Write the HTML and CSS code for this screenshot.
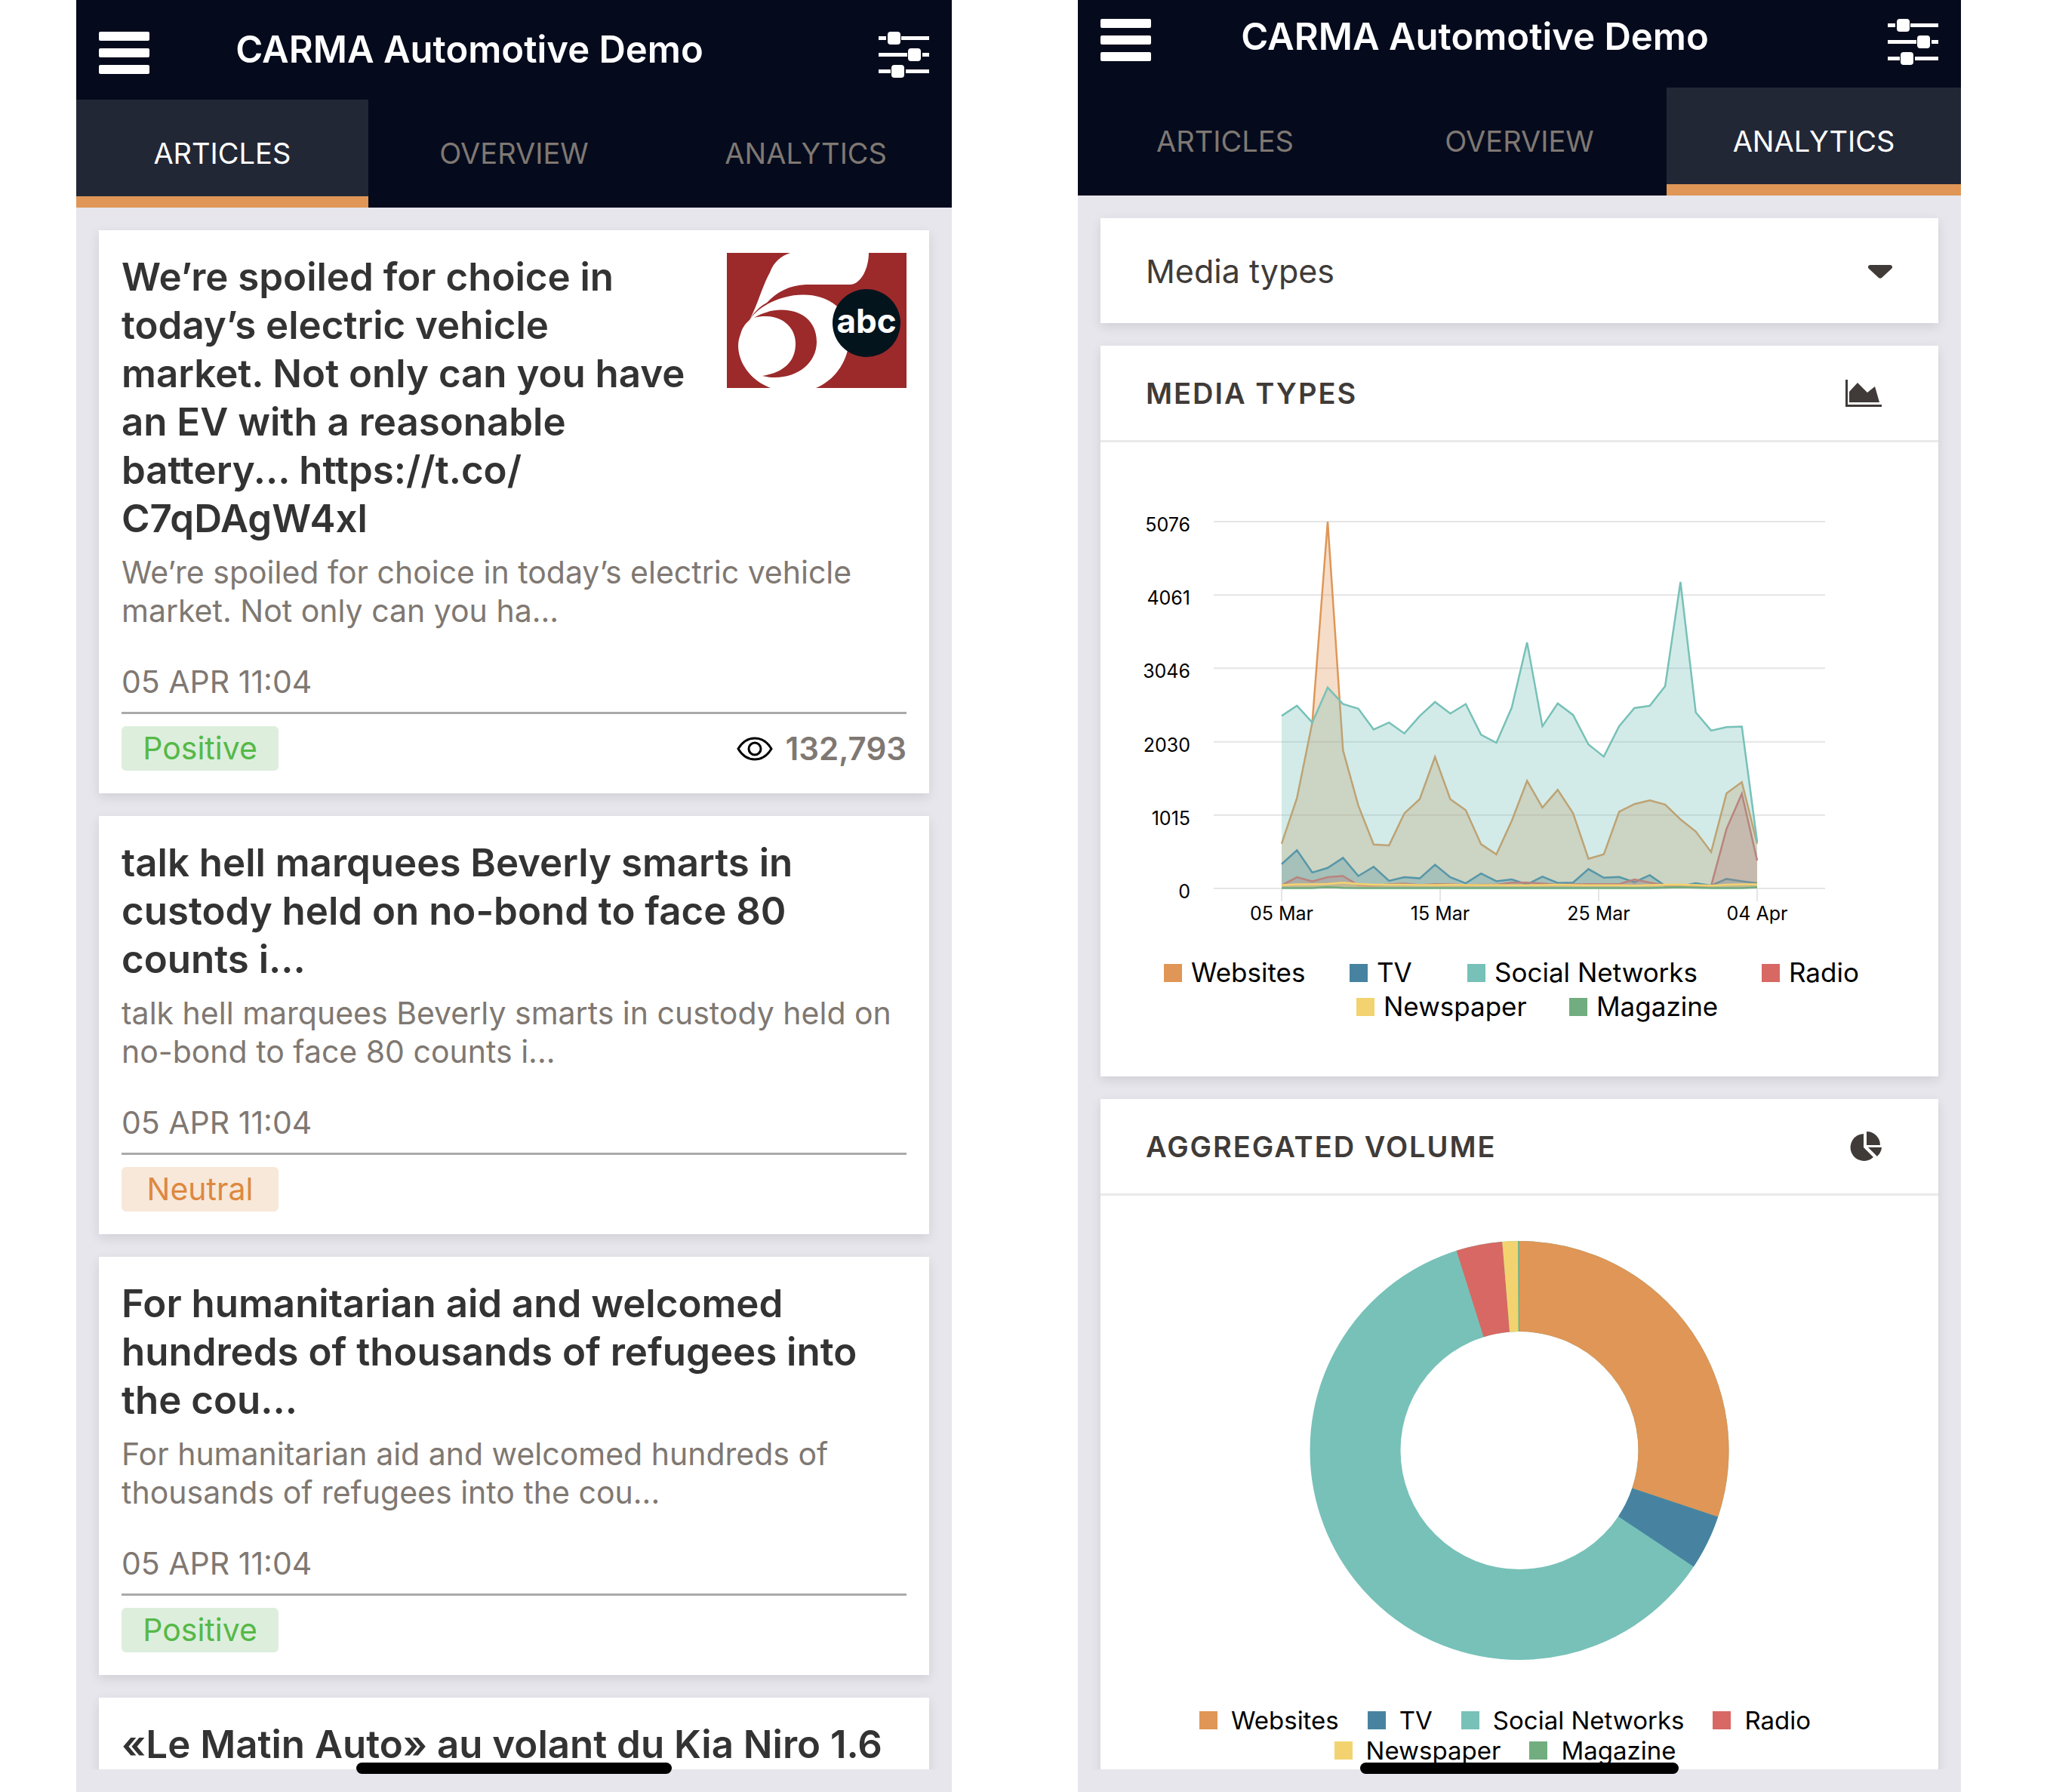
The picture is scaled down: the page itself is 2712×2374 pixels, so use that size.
FILE: index.html
```
<!DOCTYPE html>
<html lang="en">
<head>
    <meta charset="UTF-8">
    <meta name="viewport" content="width=device-width, initial-scale=1.0">
    <title>CARMA Automotive Demo</title>
    <link rel="stylesheet" href="styles.css">
</head>
<body>
    <div class="screens">

        <!-- Articles screen -->
        <section class="phone">
            <header class="header">
                <div class="topbar">
                    <button type="button" class="icon-btn" aria-label="Menu">
                        <svg class="icon-menu" viewBox="0 0 67 57"><rect width="67" height="12" rx="2"/><rect y="22" width="67" height="12" rx="2"/><rect y="44" width="67" height="12" rx="2"/></svg>
                    </button>
                    <h1>CARMA Automotive Demo</h1>
                    <button type="button" class="icon-btn" aria-label="Filters">
                        <svg class="icon-filter" viewBox="0 0 67 62">
                            <path d="M0 6h10v5H0zM30 6h37v5H30zM0 28h38v5H0zM58 28h9v5h-9zM0 50h16v5H0zM36 50h31v5H36z"/>
                            <rect x="12" width="17" height="17" rx="4"/><rect x="39" y="22" width="17" height="17" rx="4"/><rect x="17" y="44" width="17" height="17" rx="4"/>
                        </svg>
                    </button>
                </div>
                <nav class="tabs">
                    <a href="#" class="active">ARTICLES</a>
                    <a href="#">OVERVIEW</a>
                    <a href="#">ANALYTICS</a>
                </nav>
            </header>
            <main class="content">
                <article class="card article">
                    <div class="article-top">
                        <h2>We’re spoiled for choice in<br>today’s electric vehicle<br>market. Not only can you have<br>an EV with a reasonable<br>battery... https://t.co/<br>C7qDAgW4xl</h2>
                        <svg class="thumb" viewBox="0 0 238 179" role="img" aria-label="5 abc">
                            <rect width="238" height="179" fill="#9c2a2b"/>
                            <path fill="#fff" d="M84 0H188C188 20 178 41 164 42H105C82 43 66 52 53 66C42 72 35 80 30 89C42 66 46 46 57 26C62 12 72 4 84 0Z"/>
                            <path fill="#fff" d="M30 89C50 58 112 42 145 70C176 98 164 160 118 179H58C24 166 8 132 18 108C20 100 24 94 30 89Z"/>
                            <path fill="#9c2a2b" d="M36 86C68 66 119 74 119 118C119 150 85 172 47 163C78 158 91 142 91 120C91 96 68 78 36 86Z"/>
                            <circle cx="185" cy="93" r="45" fill="#03141d"/>
                            <text x="185" y="106" class="thumb-text" text-anchor="middle">abc</text>
                        </svg>
                    </div>
                    <p class="excerpt">We’re spoiled for choice in today’s electric vehicle<br>market. Not only can you ha...</p>
                    <time class="date">05 APR 11:04</time>
                    <footer class="meta">
                        <span class="badge positive">Positive</span>
                        <span class="views">
                            <svg class="icon-eye" viewBox="0 0 48 32"><path d="M2 16C8 6 16 2 24 2s16 4 22 14C40 26 32 30 24 30S8 26 2 16z"/><circle cx="24" cy="16" r="8"/></svg>
                            132,793
                        </span>
                    </footer>
                </article>

                <article class="card article">
                    <h2>talk hell marquees Beverly smarts in<br>custody held on no-bond to face 80<br>counts i...</h2>
                    <p class="excerpt">talk hell marquees Beverly smarts in custody held on<br>no-bond to face 80 counts i...</p>
                    <time class="date">05 APR 11:04</time>
                    <footer class="meta">
                        <span class="badge neutral">Neutral</span>
                    </footer>
                </article>

                <article class="card article">
                    <h2>For humanitarian aid and welcomed<br>hundreds of thousands of refugees into<br>the cou...</h2>
                    <p class="excerpt">For humanitarian aid and welcomed hundreds of<br>thousands of refugees into the cou...</p>
                    <time class="date">05 APR 11:04</time>
                    <footer class="meta">
                        <span class="badge positive">Positive</span>
                    </footer>
                </article>

                <article class="card article">
                    <h2>«Le Matin Auto» au volant du Kia Niro 1.6</h2>
                </article>
            </main>
            <div class="home-bar"></div>
        </section>

        <!-- Analytics screen -->
        <section class="phone">
            <header class="header scrolled">
                <div class="topbar">
                    <button type="button" class="icon-btn" aria-label="Menu">
                        <svg class="icon-menu" viewBox="0 0 67 57"><rect width="67" height="12" rx="2"/><rect y="22" width="67" height="12" rx="2"/><rect y="44" width="67" height="12" rx="2"/></svg>
                    </button>
                    <h1>CARMA Automotive Demo</h1>
                    <button type="button" class="icon-btn" aria-label="Filters">
                        <svg class="icon-filter" viewBox="0 0 67 62">
                            <path d="M0 6h10v5H0zM30 6h37v5H30zM0 28h38v5H0zM58 28h9v5h-9zM0 50h16v5H0zM36 50h31v5H36z"/>
                            <rect x="12" width="17" height="17" rx="4"/><rect x="39" y="22" width="17" height="17" rx="4"/><rect x="17" y="44" width="17" height="17" rx="4"/>
                        </svg>
                    </button>
                </div>
                <nav class="tabs">
                    <a href="#">ARTICLES</a>
                    <a href="#">OVERVIEW</a>
                    <a href="#" class="active">ANALYTICS</a>
                </nav>
            </header>
            <main class="content">
                <div class="card select-card">
                    <select id="breakdown" aria-label="Breakdown">
                        <option>Media types</option>
                    </select>
                    <svg class="caret" viewBox="0 0 32 18"><path d="M3 0h26c3 0 4 3 2 5L18 17c-1 1-3 1-4 0L1 5C-1 3 0 0 3 0z"/></svg>
                </div>

                <section class="card">
                    <div class="card-head">
                        <h3>MEDIA TYPES</h3>
                        <svg class="icon-area" viewBox="0 0 48 36"><path d="M0 0h3v33h45v3H0zM5 30V16L16 4l13 13 10-8 6 21z"/></svg>
                    </div>
                    <svg class="chart" id="areaChart" viewBox="0 0 1110 680"></svg>
                    <div class="legend legend-area">
                        <div class="legend-row four">
                            <span class="key websites">Websites</span>
                            <span class="key tv">TV</span>
                            <span class="key social">Social Networks</span>
                            <span class="key radio">Radio</span>
                        </div>
                        <div class="legend-row two">
                            <span class="key newspaper">Newspaper</span>
                            <span class="key magazine">Magazine</span>
                        </div>
                    </div>
                </section>

                <section class="card">
                    <div class="card-head">
                        <h3>AGGREGATED VOLUME</h3>
                        <svg class="icon-pie" viewBox="0 0 42 40"><path d="M18 3v18l13 13A18 18 0 1 1 18 3zM22 0a18 18 0 0 1 18 18H22zM24 21h18a18 18 0 0 1-6 12z"/></svg>
                    </div>
                    <svg class="chart donut" viewBox="0 0 1110 675">
                        <g transform="rotate(-90 555 337.5)">
                            <circle cx="555" cy="337.5" r="217.5" pathLength="360" stroke="#77c1b8"/>
                            <circle cx="555" cy="337.5" r="217.5" pathLength="360" stroke="#df9656" stroke-dasharray="108.5 360"/>
                            <circle cx="555" cy="337.5" r="217.5" pathLength="360" stroke="#4783a1" stroke-dasharray="15.2 360" stroke-dashoffset="-108.5"/>
                            <circle cx="555" cy="337.5" r="217.5" pathLength="360" stroke="#d86863" stroke-dasharray="12.8 360" stroke-dashoffset="-342.5"/>
                            <circle cx="555" cy="337.5" r="217.5" pathLength="360" stroke="#f3d36f" stroke-dasharray="4.3 360" stroke-dashoffset="-355.3"/>
                            <circle cx="555" cy="337.5" r="217.5" pathLength="360" stroke="#71ad7e" stroke-dasharray="0.4 360" stroke-dashoffset="-359.6"/>
                        </g>
                    </svg>
                    <div class="legend legend-donut">
                        <div class="legend-row">
                            <span class="key websites">Websites</span>
                            <span class="key tv">TV</span>
                            <span class="key social">Social Networks</span>
                            <span class="key radio">Radio</span>
                        </div>
                        <div class="legend-row">
                            <span class="key newspaper">Newspaper</span>
                            <span class="key magazine">Magazine</span>
                        </div>
                    </div>
                </section>
            </main>
            <div class="home-bar"></div>
        </section>
    </div>

    <script src="chart.js"></script>
</body>
</html>
```

FILE: styles.css
```
* {
    box-sizing: border-box;
}

body {
    margin: 0;
    background-color: #fff;
    font-family: Inter, "Liberation Sans", sans-serif;
}

h1, h2, h3, p {
    margin: 0;
}

.screens {
    display: grid;
    grid-template-columns: 1160fr 1170fr;
    column-gap: 167px;
    padding: 0 114px 0 101px;
}

.phone {
    position: relative;
    display: flex;
    flex-direction: column;
    height: 100vh;
    min-width: 0;
    padding-bottom: 30px;
    background-color: #e7e6ec;
}

/* header */
.header {
    flex: none;
    background-color: #050b1d;
    color: #fff;
}

.topbar {
    display: flex;
    align-items: flex-start;
    height: 132px;
    padding: 34px 30px 0;
}

.scrolled .topbar {
    height: 116px;
    padding-top: 17px;
}

.topbar h1 {
    flex: 1;
    padding-right: 118px;
    font-size: 49px;
    font-weight: 600;
    line-height: 64px;
    text-align: center;
}

.icon-btn {
    padding: 8px 0 0;
    border: 0;
    background: none;
    line-height: 0;
}

.icon-menu, .icon-filter {
    width: 67px;
    fill: #fff;
}

.tabs {
    display: grid;
    grid-template-columns: repeat(3, 1fr);
}

.tabs a {
    height: 143px;
    border-bottom: 15px solid transparent;
    color: #7f7872;
    font-size: 38px;
    line-height: 143px;
    text-align: center;
    text-decoration: none;
}

.tabs .active {
    background-color: #222736;
    border-bottom-color: #df9656;
    color: #fff;
}

/* cards */
.content {
    flex: 1;
    min-height: 0;
    padding: 30px 30px 0;
    overflow: hidden;
}

.card {
    margin-bottom: 30px;
    background-color: #fff;
    box-shadow: 0 5px 14px rgba(0, 0, 0, 0.1);
}

.article {
    padding: 30px;
}

.article-top {
    display: flex;
    justify-content: space-between;
    align-items: flex-start;
}

.article h2 {
    color: #333;
    font-size: 51px;
    font-weight: 600;
    line-height: 64px;
    white-space: nowrap;
}

.thumb {
    flex: none;
    width: 238px;
    height: 179px;
}

.thumb-text {
    fill: #fff;
    font-size: 44px;
    font-weight: 700;
}

.excerpt {
    margin-top: 14px;
    color: #7f7872;
    font-size: 41px;
    line-height: 51px;
    white-space: nowrap;
}

.date {
    display: block;
    margin-top: 43px;
    padding-bottom: 14px;
    border-bottom: 3px solid #aaa;
    color: #7f7872;
    font-size: 41px;
    line-height: 51px;
}

.meta {
    display: flex;
    justify-content: space-between;
    align-items: center;
    padding-top: 16px;
}

.badge {
    width: 208px;
    border-radius: 6px;
    font-size: 41px;
    line-height: 59px;
    text-align: center;
}

.positive {
    background-color: #ddeedd;
    color: #55b947;
}

.neutral {
    background-color: #f8e8da;
    color: #dd8840;
}

.views {
    display: flex;
    align-items: center;
    gap: 16px;
    color: #7f7872;
    font-size: 42px;
    font-weight: 600;
    line-height: 59px;
}

.icon-eye {
    width: 48px;
    fill: none;
    stroke: #000;
    stroke-width: 3;
}

/* analytics */
.select-card {
    position: relative;
}

.select-card select {
    display: block;
    width: 100%;
    height: 139px;
    padding: 0 60px;
    border: 0;
    background: none;
    appearance: none;
    color: #403b38;
    font-family: inherit;
    font-size: 43px;
}

.caret {
    position: absolute;
    top: 62px;
    right: 61px;
    width: 32px;
    fill: #403b38;
    pointer-events: none;
}

.card-head {
    display: flex;
    justify-content: space-between;
    align-items: center;
    height: 128px;
    padding: 0 75px 0 60px;
    border-bottom: 3px solid #e9e9e9;
}

.card-head h3 {
    color: #403b38;
    font-size: 38px;
    font-weight: 600;
    letter-spacing: 2px;
}

.icon-area {
    width: 48px;
    fill: #403b38;
}

.icon-pie {
    width: 42px;
    fill: #403b38;
}

.chart {
    display: block;
    width: 100%;
}

.chart line {
    stroke: #e5e5e5;
    stroke-width: 2;
}

.chart text {
    fill: #000;
    font-size: 25px;
}

.donut circle {
    fill: none;
    stroke-width: 120;
}

/* legends */
.legend-row {
    display: flex;
    justify-content: center;
}

.key {
    display: flex;
    align-items: center;
    white-space: nowrap;
}

.key::before {
    content: "";
    width: 24px;
    height: 24px;
}

.legend-area {
    padding-bottom: 70px;
    font-size: 35px;
    line-height: 45px;
}

.legend-area .legend-row {
    display: grid;
}

.legend-area .four {
    grid-template-columns: 246px 156px 390px 150px;
}

.legend-area .two {
    grid-template-columns: 282px 198px;
    padding-left: 48px;
}

.legend-area .key::before {
    margin-right: 12px;
}

.legend-donut {
    padding-bottom: 70px;
    font-size: 33px;
    line-height: 40px;
}

.legend-donut .key {
    margin-right: 38px;
}

.legend-donut .key::before {
    margin-right: 18px;
}

.websites::before { background-color: #df9656; }
.tv::before { background-color: #4783a1; }
.social::before { background-color: #77c1b8; }
.radio::before { background-color: #d86863; }
.newspaper::before { background-color: #f3d36f; }
.magazine::before { background-color: #71ad7e; }

/* home indicator lies over the bottom of the scrolled content */
.home-bar {
    position: absolute;
    right: 32%;
    bottom: 24px;
    left: 32%;
    height: 15px;
    border-radius: 8px;
    background-color: #000;
}
```

FILE: chart.js
```
const max = 5076;
const left = 240;
const right = 870;
const ceiling = 105;
const floor = 591;

const series = [
    { color: "#df9656", data: [620, 1252, 2296, 5076, 1912, 1148, 608, 596, 1040, 1236, 1820, 1236, 1084, 612, 472, 936, 1488, 1120, 1364, 1040, 412, 472, 1060, 1168, 1220, 1160, 956, 788, 504, 1316, 1472, 620] },
    { color: "#4783a1", data: [336, 528, 220, 284, 424, 172, 300, 104, 156, 140, 328, 156, 72, 208, 100, 124, 56, 164, 76, 80, 268, 148, 160, 88, 184, 36, 28, 72, 40, 132, 100, 72] },
    { color: "#d86863", data: [44, 156, 96, 156, 172, 44, 36, 56, 68, 48, 60, 60, 44, 52, 52, 80, 80, 68, 52, 56, 60, 60, 60, 124, 80, 44, 44, 36, 36, 824, 1312, 388] },
    { color: "#77c1b8", data: [2388, 2528, 2296, 2780, 2552, 2488, 2200, 2296, 2144, 2384, 2580, 2420, 2552, 2128, 2016, 2500, 3404, 2244, 2560, 2400, 1992, 1824, 2244, 2496, 2528, 2800, 4240, 2436, 2184, 2232, 2240, 648] },
    { color: "#f3d36f", data: [48, 56, 56, 64, 80, 64, 52, 52, 52, 48, 48, 52, 48, 48, 48, 44, 44, 48, 52, 48, 44, 44, 44, 40, 48, 52, 52, 48, 40, 52, 56, 56] },
    { color: "#71ad7e", data: [4, 4, 4, 20, 8, 4, 4, 4, 4, 4, 4, 4, 4, 4, 4, 4, 4, 4, 4, 4, 4, 4, 4, 4, 4, 12, 16, 12, 4, 4, 4, 16] }
];

const y = v => floor - v / max * (floor - ceiling);
let svg = "";

// grid and value axis
[0, 1015, 2030, 3046, 4061, 5076].forEach(v => {
    svg += `<line x1="150" x2="960" y1="${y(v)}" y2="${y(v)}"/>`;
    svg += `<text x="119" y="${y(v) + 13}" text-anchor="end">${v}</text>`;
});

// date axis
["05 Mar", "15 Mar", "25 Mar", "04 Apr"].forEach((label, i) => {
    const x = left + i * 210;
    svg += `<line x1="${x}" x2="${x}" y1="${floor}" y2="${floor + 17}"/>`;
    svg += `<text x="${x}" y="${floor + 42}" text-anchor="middle">${label}</text>`;
});

series.forEach(s => {
    const step = (right - left) / (s.data.length - 1);
    const points = s.data.map((v, i) => `${(left + i * step).toFixed(1)},${y(v).toFixed(1)}`).join(" ");
    svg += `<polygon points="${left},${floor} ${points} ${right},${floor}" fill="${s.color}" fill-opacity="0.32"/>`;
    svg += `<polyline points="${points}" fill="none" stroke="${s.color}" stroke-width="2.5"/>`;
});

document.getElementById("areaChart").innerHTML = svg;
```
